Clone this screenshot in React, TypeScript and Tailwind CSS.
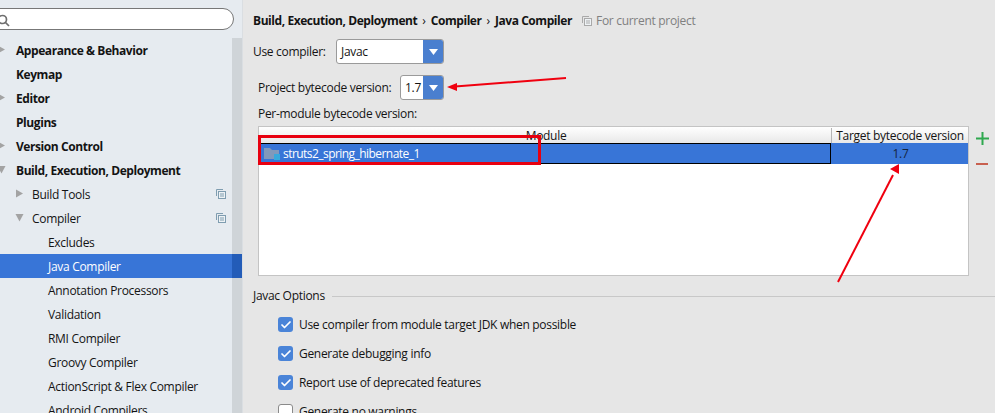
import { Check } from 'lucide-react';

const FONT = 'font-["Open_Sans","Noto_Sans",sans-serif]';

type TreeRow = {
  label: string;
  level: 0 | 1 | 2;
  arrow?: 'right' | 'down';
  selected?: boolean;
  copy?: boolean;
};

const rows: TreeRow[] = [
  { label: 'Appearance & Behavior', level: 0, arrow: 'right' },
  { label: 'Keymap', level: 0 },
  { label: 'Editor', level: 0, arrow: 'right' },
  { label: 'Plugins', level: 0 },
  { label: 'Version Control', level: 0, arrow: 'right' },
  { label: 'Build, Execution, Deployment', level: 0, arrow: 'down' },
  { label: 'Build Tools', level: 1, arrow: 'right', copy: true },
  { label: 'Compiler', level: 1, arrow: 'down', copy: true },
  { label: 'Excludes', level: 2 },
  { label: 'Java Compiler', level: 2, selected: true },
  { label: 'Annotation Processors', level: 2 },
  { label: 'Validation', level: 2 },
  { label: 'RMI Compiler', level: 2 },
  { label: 'Groovy Compiler', level: 2 },
  { label: 'ActionScript & Flex Compiler', level: 2 },
  { label: 'Android Compilers', level: 2 },
];

function CopyIcon({ color = '#7f9db0' }: { color?: string }) {
  return (
    <svg width="10" height="10" viewBox="0 0 10 10" fill="none" stroke={color} strokeWidth="1">
      <path d="M0.5 7V0.5H7" />
      <rect x="2.5" y="2.5" width="7" height="7" fill="#eef2f5" />
      <path d="M4 5H8M4 7H8" />
    </svg>
  );
}

function TreeArrow({ dir }: { dir: 'right' | 'down' }) {
  return (
    <svg width="9" height="9" viewBox="0 0 9 9" fill="#a3a3a3">
      {dir === 'right' ? <path d="M1 0.5L8 4.5L1 8.5Z" /> : <path d="M0.5 1H8.5L4.5 8.5Z" />}
    </svg>
  );
}

function Row({ row }: { row: TreeRow }) {
  const pad = row.level === 0 ? 'pl-4 font-bold tracking-[-0.43px]' : row.level === 1 ? 'pl-8' : 'pl-12';
  const arrowPos = row.level === 0 ? 'left-[-3px]' : 'left-[15px]';
  return (
    <div className={`relative flex h-6 shrink-0 items-center pt-px ${pad} ${row.selected ? 'bg-[#3875d7] text-white' : 'text-[#141414]'}`}>
      {row.arrow && (
        <span className={`absolute top-[7px] ${arrowPos}`}>
          <TreeArrow dir={row.arrow} />
        </span>
      )}
      <span className="whitespace-nowrap">{row.label}</span>
      {row.copy && (
        <span className="absolute left-[216px] top-[7px]">
          <CopyIcon />
        </span>
      )}
      {row.selected && <span className="absolute right-0 top-0 h-6 w-[10px] bg-[#235cb8]" />}
    </div>
  );
}

function Sidebar() {
  return (
    <aside className="flex h-[413px] w-[243px] shrink-0 flex-col overflow-hidden border-r border-[#dadee2] bg-[#e6ebf0]">
      <div className="flex h-[38px] shrink-0 items-start pt-2">
        <div className="relative ml-[-12px] h-[22px] w-[246px] rounded-full border border-[#777777] bg-white">
          <svg className="absolute left-[8px] top-[5px]" width="13" height="13" viewBox="0 0 13 13" fill="none" stroke="#6e6e6e" strokeWidth="1.7">
            <circle cx="5.500" cy="5.500" r="4" />
            <path d="M8.500 8.500L12 12" />
          </svg>
        </div>
      </div>
      <div className="relative flex-1">
        <div className="absolute right-0 top-0 h-full w-[10px] bg-[#cfd4d8]" />
        <div className="relative flex flex-col">
          {rows.map((row) => (
            <Row key={row.label} row={row} />
          ))}
        </div>
      </div>
    </aside>
  );
}

function Combo({ value, width }: { value: string; width: string }) {
  return (
    <div className={`flex h-[25px] ${width} overflow-hidden rounded-[3px] border border-[#9a9a9a] bg-white`}>
      <span className="flex flex-1 items-center pl-1">{value}</span>
      <span className="flex w-[20px] items-center justify-center bg-[#4a7fcf]">
        <svg width="9" height="6" viewBox="0 0 9 6" fill="white">
          <path d="M0 0H9L4.500 6Z" />
        </svg>
      </span>
    </div>
  );
}

function Option({ label, checked }: { label: string; checked: boolean }) {
  return (
    <div className="flex h-[29px] shrink-0 items-center pl-[25px]">
      <span
        className={`mr-[6px] flex h-[15px] w-[15px] items-center justify-center rounded-[3px] ${
          checked ? 'bg-[#4a84d8]' : 'border border-[#8a8a8a] bg-white'
        }`}
      >
        {checked && <Check size={12} strokeWidth={3.5} color="white" />}
      </span>
      <span className="whitespace-nowrap">{label}</span>
    </div>
  );
}

function ModuleTable() {
  return (
    <div className="flex">
      <div className="ml-[5px] flex h-[150px] w-[711px] flex-col border border-[#c4c4c4] bg-white">
        <div className="flex h-4 shrink-0 bg-gradient-to-b from-white to-[#e8e8e8] pt-px">
          <div className="flex flex-1 justify-center pl-[2px] leading-4">Module</div>
          <div className="w-[137px] border-l border-[#b5b5b5] text-center leading-4">Target bytecode version</div>
        </div>
        <div className="flex h-[21px] shrink-0 bg-[#3875d7]">
          <div className="flex flex-1 items-center border border-black pl-1 tracking-[-0.55px] text-white">
            <svg className="mr-[3px]" width="16" height="13" viewBox="0 0 16 13">
              <path d="M0 1H6L8 3H15V12H0Z" fill="#8199bb" />
              <rect x="10" y="7" width="6" height="6" fill="#38a9dc" />
            </svg>
            struts2_spring_hibernate_1
          </div>
          <div className="flex w-[137px] items-center justify-center pl-[2px] text-[#16243c]">1.7</div>
        </div>
      </div>
      <div className="ml-[6px] flex w-[14px] flex-col items-center">
        <svg className="mt-[6px]" width="13" height="13" viewBox="0 0 13 13" fill="#2fa84f">
          <path d="M5.500 0H7.500V5.500H13V7.500H7.500V13H5.500V7.500H0V5.500H5.500Z" />
        </svg>
        <span className="mt-[18px] h-[2px] w-[12px] bg-[#c8604f]" />
      </div>
    </div>
  );
}

function Annotations() {
  return (
    <svg className="pointer-events-none absolute left-0 top-0" width="995" height="413" fill="none">
      <rect x="259.500" y="136.500" width="280" height="27" stroke="#e8000f" strokeWidth="3" />
      <path d="M566 78L455 86.500" stroke="#f0000f" strokeWidth="2" />
      <path d="M447 87L457 83V91Z" fill="#f0000f" />
      <path d="M838 282L893 175" stroke="#f0000f" strokeWidth="2" />
      <path d="M899 164L899 174L890 169Z" fill="#f0000f" />
    </svg>
  );
}

export default function App() {
  return (
    <div className={`relative flex h-[413px] w-[995px] overflow-hidden bg-[#e6e6e6] text-[12px] tracking-[-0.3px] text-[#141414] ${FONT}`}>
      <Sidebar />
      <main className="flex min-w-0 flex-1 flex-col pl-[10px]">
        <div className="flex h-[39px] shrink-0 items-start pt-[12px] leading-[18px]">
          <span className="font-bold tracking-[-0.43px]">Build, Execution, Deployment</span>
          <span className="mx-[5px]">›</span>
          <span className="font-bold tracking-[-0.43px]">Compiler</span>
          <span className="mx-[5px]">›</span>
          <span className="font-bold tracking-[-0.43px]">Java Compiler</span>
          <span className="ml-[10px] mt-[4px]">
            <CopyIcon color="#a9a9a9" />
          </span>
          <span className="ml-[4px] text-[#808080]">For current project</span>
        </div>
        <div className="flex items-center">
          <span className="w-[83px] whitespace-nowrap">Use compiler:</span>
          <Combo value="Javac" width="w-[108px]" />
        </div>
        <div className="mt-[11px] flex items-center pl-[5px]">
          <span className="w-[142px] whitespace-nowrap pt-px">Project bytecode version:</span>
          <Combo value="1.7" width="w-[44px]" />
        </div>
        <div className="flex h-[26px] shrink-0 items-center pl-[5px] pt-px">Per-module bytecode version:</div>
        <ModuleTable />
        <div className="mt-[11px] flex h-[18px] shrink-0 items-center">
          <span className="whitespace-nowrap">Javac Options</span>
          <span className="ml-[7px] h-px flex-1 bg-[#c8c8c8]" />
        </div>
        <div className="mt-[5px] flex flex-col">
          <Option label="Use compiler from module target JDK when possible" checked />
          <Option label="Generate debugging info" checked />
          <Option label="Report use of deprecated features" checked />
          <Option label="Generate no warnings" checked={false} />
        </div>
      </main>
      <Annotations />
    </div>
  );
}
